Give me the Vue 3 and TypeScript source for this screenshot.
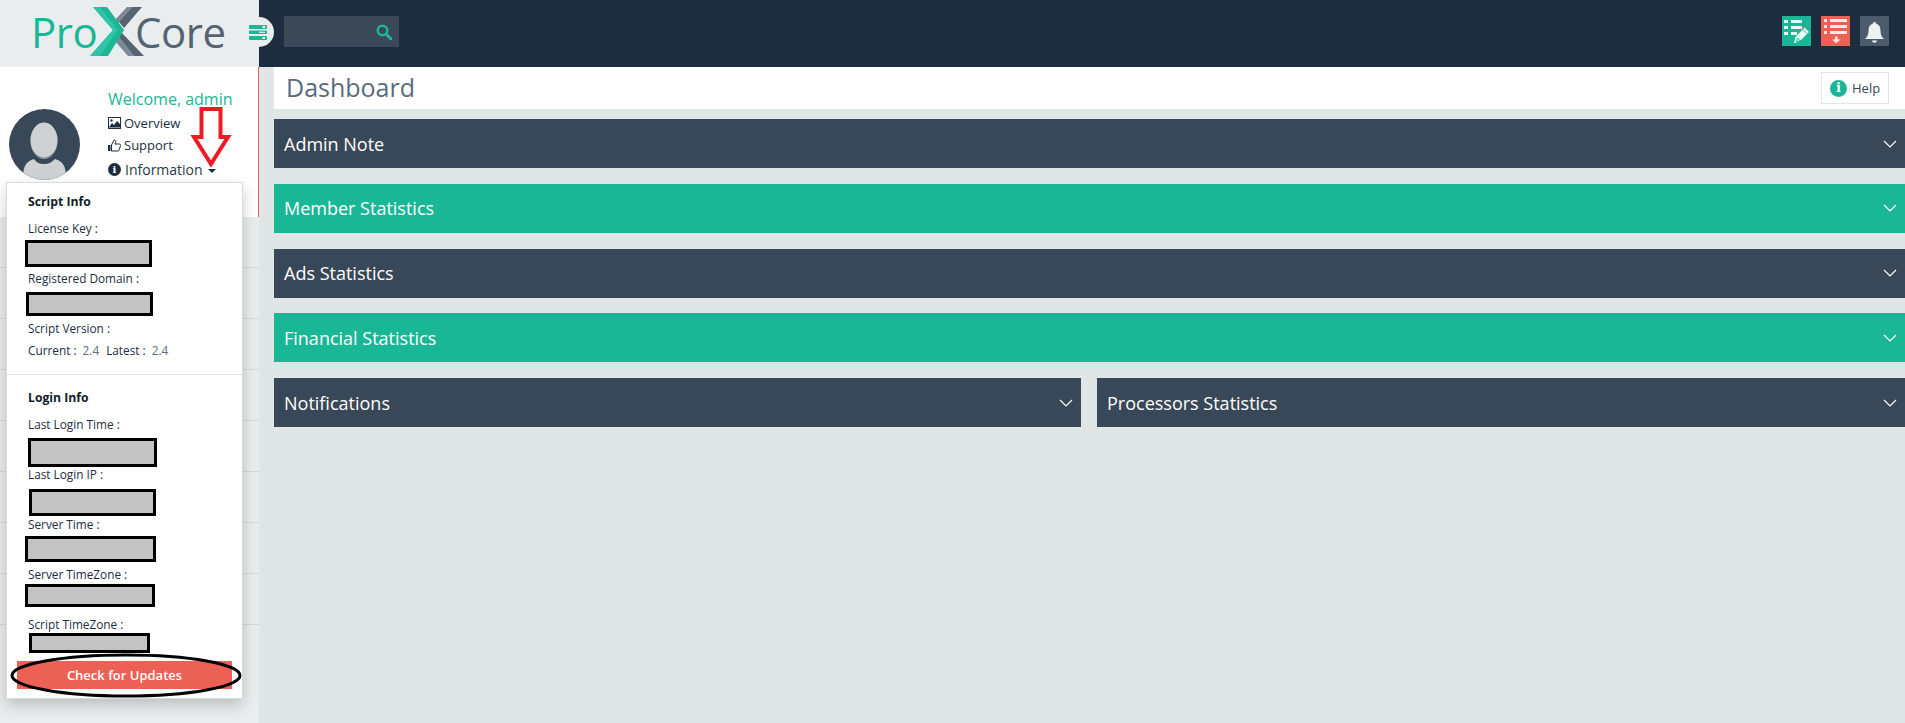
<script setup lang="ts">
interface Field {
  label: string
  left: number
  width: number
  height: number
  top: number
}

const panels = [
  { title: 'Admin Note', tone: 'dark' },
  { title: 'Member Statistics', tone: 'teal' },
  { title: 'Ads Statistics', tone: 'dark' },
  { title: 'Financial Statistics', tone: 'teal' },
]
const splitPanels = ['Notifications', 'Processors Statistics']
const navRows = [1, 2, 3, 4, 5, 6, 7, 8]

const scriptFields: Field[] = [
  { label: 'License Key :', left: -3, width: 127, height: 27, top: 2 },
  { label: 'Registered Domain :', left: -2, width: 127, height: 24, top: 4 },
]
const loginFields: Field[] = [
  { label: 'Last Login Time :', left: 0, width: 129, height: 29, top: 4 },
  { label: 'Last Login IP :', left: 1, width: 127, height: 27, top: 5 },
  { label: 'Server Time :', left: -3, width: 131, height: 26, top: 2 },
  { label: 'Server TimeZone :', left: -3, width: 130, height: 23, top: 0 },
  { label: 'Script TimeZone :', left: 1, width: 121, height: 20, top: -1 },
]
function boxStyle(f: Field) {
  return {
    marginLeft: f.left + 'px',
    marginTop: f.top + 'px',
    width: f.width + 'px',
    height: f.height + 'px',
  }
}
</script>

<template>
  <div class="page">
    <header class="topbar">
      <div class="brand">
        <span class="brand-pro">Pro</span>
        <svg class="brand-x" viewBox="0 0 56 50" width="56" height="50">
          <polygon points="37,0 42,0 26,19 23,15" fill="#7d8996" />
          <polygon points="42,0 52,0 34,21 29,15" fill="#566472" />
          <polygon points="24,33 28,29 44,49 38,49" fill="#7d8996" />
          <polygon points="28,29 32,26 54,49 44,49" fill="#566472" />
          <polygon points="3,0 17,0 34,23 18,49 0,49 23,23" fill="#1ab797" />
          <polygon points="3,0 10,0 28,23 10,49 0,49 23,23" fill="#2fc4a6" />
        </svg>
        <span class="brand-core">Core</span>
      </div>
      <div class="toggle">
        <svg viewBox="0 0 18 15" width="18" height="15">
          <path d="M1 0h16a1 1 0 0 1 1 1v2a1 1 0 0 1-1 1H1a1 1 0 0 1-1-1V1a1 1 0 0 1 1-1zM1 5.500h16a1 1 0 0 1 1 1v1.500a1 1 0 0 1-1 1H1a1 1 0 0 1-1-1v-1.500a1 1 0 0 1 1-1zM1 11h16a1 1 0 0 1 1 1v2a1 1 0 0 1-1 1H1a1 1 0 0 1-1-1v-2a1 1 0 0 1 1-1z" fill="#1ab797" />
          <path d="M13.500 1h2.500v2h-2.500zM10 6.800h6v1h-6zM13.500 12h2.500v2h-2.500z" fill="#fff" />
        </svg>
      </div>
      <div class="search">
        <svg viewBox="0 0 16 16" width="16" height="16">
          <circle cx="6.500" cy="6.500" r="4.800" fill="none" stroke="#1ab797" stroke-width="2.400" />
          <path d="M10 10l5 5" stroke="#1ab797" stroke-width="3" stroke-linecap="round" />
        </svg>
      </div>
      <div class="top-actions">
        <span class="tile tile-teal">
          <svg viewBox="0 0 29 30" width="29" height="30">
            <path d="M2 4h4v3H2zM9 4h11v3H9zM2 10h4v3H2zM9 10h11v3H9zM2 16h4v3H2zM9 16h6v3H9z" fill="#eafaf6" />
            <path d="M12 27l1.500-6 9-9.500 4.500 4.500-9.500 9.500z" fill="#eafaf6" />
            <path d="M14.500 25.500l1-3.500 3 3zM21 13.500l4 4" fill="none" stroke="#1ab797" stroke-width="1" />
          </svg>
        </span>
        <span class="tile tile-red">
          <svg viewBox="0 0 29 30" width="29" height="30">
            <path d="M3 3h3v3H3zM9 3h17v3H9zM3 9h3v3H3zM9 9h17v3H9zM3 15h3v3H3zM9 15h17v3H9z" fill="#fde8e6" />
            <path d="M14 20.500h2.500v3h3l-4.250 3.800-4.250-3.800h3z" fill="#fde8e6" />
          </svg>
        </span>
        <span class="tile tile-slate">
          <svg viewBox="0 0 29 30" width="29" height="30">
            <path d="M14.500 6a1.800 1.800 0 0 1 1.800 1.800c3 .9 4.200 3.600 4.200 7 0 4.200 1.300 6.400 3.500 8.200H5c2.200-1.800 3.500-4 3.500-8.200 0-3.400 1.200-6.100 4.200-7A1.800 1.800 0 0 1 14.500 6z" fill="#eef1f2" />
            <path d="M12 24.500h5c0 1.200-1.100 2.300-2.500 2.300s-2.500-1.100-2.500-2.300z" fill="#eef1f2" />
          </svg>
        </span>
      </div>
    </header>

    <div class="body">
      <aside class="sidebar">
        <section class="user">
          <svg class="avatar" viewBox="0 0 71 71" width="71" height="71">
            <defs>
              <clipPath id="avatar-clip"><circle cx="35.500" cy="35.500" r="35.500" /></clipPath>
            </defs>
            <circle cx="35.500" cy="35.500" r="35.500" fill="#394858" />
            <g clip-path="url(#avatar-clip)">
              <ellipse cx="35" cy="32" rx="13.500" ry="18" fill="#8d949b" />
              <ellipse cx="35" cy="31" rx="13.500" ry="17.500" fill="#cdd1d4" />
              <path d="M14 71c0-11 1-18 11-21 2 3 5 5 10 5s8-2 11-5c10 3 11 10 11 21z" fill="#cdd1d4" />
            </g>
          </svg>
          <div class="user-links">
            <div class="welcome">Welcome, admin</div>
            <div class="user-link">
              <svg viewBox="0 0 13 12" width="13" height="12">
                <rect width="13" height="12" fill="#1d2d3f" />
                <rect x="1" y="1" width="11" height="10" fill="#fff" />
                <path d="M1 10l3-4 2 2 3-4 3 3v3.500H1z" fill="#1d2d3f" />
                <circle cx="3.500" cy="3.500" r="1.200" fill="#1d2d3f" />
              </svg>
              <span>Overview</span>
            </div>
            <div class="user-link">
              <svg viewBox="0 0 13 13" width="13" height="13">
                <path d="M3.500 12V6l2.500-5c1.500 0 2 1 1.500 2.500L7 5h4.500c1 0 1.300 1 1 1.800l-1.500 4.400c-.2.500-.5.800-1 .8z" fill="none" stroke="#1d2d3f" stroke-width="1" />
                <rect x="0" y="6" width="2.500" height="6" fill="#1d2d3f" />
              </svg>
              <span>Support</span>
            </div>
            <div class="user-link user-link-info">
              <span class="info-dot info-dot-dark">i</span>
              <span>Information</span>
              <span class="caret"></span>
            </div>
          </div>
        </section>
        <div v-for="row in navRows" :key="row" class="nav-row"></div>

        <div class="info-menu">
          <h4 class="menu-title">Script Info</h4>
          <div v-for="f in scriptFields" :key="f.label" class="field">
            <div class="field-label">{{ f.label }}</div>
            <div class="redact" :style="boxStyle(f)"></div>
          </div>
          <div class="field-label">Script Version :</div>
          <div class="field-label version">
            <span>Current :</span><span class="num">2.4</span>
            <span class="latest">Latest :</span><span class="num">2.4</span>
          </div>
          <hr class="menu-rule" />
          <h4 class="menu-title">Login Info</h4>
          <div class="login-list">
            <div v-for="f in loginFields" :key="f.label" class="field">
              <div class="field-label">{{ f.label }}</div>
              <div class="redact" :style="boxStyle(f)"></div>
            </div>
          </div>
          <button class="update-btn" type="button">Check for Updates</button>
        </div>
      </aside>

      <main class="main">
        <div class="page-title">
          <h1>Dashboard</h1>
          <button class="help" type="button">
            <span class="info-dot info-dot-teal">i</span>
            Help
          </button>
        </div>
        <div class="panels">
          <div v-for="p in panels" :key="p.title" class="panel" :class="p.tone">
            <span>{{ p.title }}</span>
            <svg class="chev" viewBox="0 0 14 8" width="14" height="8"><path d="M1 1l6 6 6-6" fill="none" stroke="#fff" stroke-width="1.200" /></svg>
          </div>
          <div class="split">
            <div v-for="t in splitPanels" :key="t" class="panel dark">
              <span>{{ t }}</span>
              <svg class="chev" viewBox="0 0 14 8" width="14" height="8"><path d="M1 1l6 6 6-6" fill="none" stroke="#fff" stroke-width="1.200" /></svg>
            </div>
          </div>
        </div>
      </main>
    </div>

    <svg class="annotations" viewBox="0 0 1905 723" width="1905" height="723">
      <polygon points="201.500,109 220.500,109 220.500,137 228,137 211,164 194,137 201.500,137" fill="none" stroke="#ed1c24" stroke-width="4" />
      <ellipse cx="126" cy="675.500" rx="114" ry="20.500" fill="none" stroke="#000" stroke-width="3" />
    </svg>
  </div>
</template>

<style>
html, body { margin: 0; background: #e0e5e5; }
</style>

<style scoped>
* { box-sizing: border-box; }
.page {
  position: relative;
  width: 1905px;
  height: 723px;
  overflow: hidden;
  background: #e0e5e5;
  font-family: "Open Sans", "Liberation Sans", sans-serif;
  display: flex;
  flex-direction: column;
}
.topbar {
  position: relative;
  height: 67px;
  flex: none;
  background: #1d2d3f;
  display: flex;
  align-items: flex-start;
}
.brand {
  width: 259px;
  height: 67px;
  flex: none;
  background: #e9edee;
  display: flex;
  align-items: center;
  padding: 0 0 3px 31px;
  font-size: 42px;
  line-height: 1;
  letter-spacing: -0.5px;
}
.brand-pro { color: #1ab797; width: 59px; }
.brand-core { color: #566472; margin-left: -11px; }
.brand-x { flex: none; }
.toggle {
  position: absolute;
  left: 244px;
  top: 17px;
  width: 30px;
  height: 30px;
  border-radius: 50%;
  background: #e9edee;
  display: flex;
  align-items: center;
  padding-left: 5px;
}
.search {
  margin: 16px 0 0 25px;
  width: 115px;
  height: 31px;
  background: #3a4858;
  display: flex;
  align-items: center;
  justify-content: flex-end;
  padding-right: 7px;
}
.top-actions {
  margin: 16px 16px 0 auto;
  display: flex;
  gap: 10px;
}
.tile { width: 29px; height: 30px; display: block; }
.tile svg { display: block; }
.tile-teal { background: #1ab797; }
.tile-red { background: #ec6156; }
.tile-slate { background: #4c5c6c; }

.body { flex: 1; display: flex; min-height: 0; }
.sidebar {
  position: relative;
  width: 259px;
  flex: none;
  background: #e9edee;
}
.user {
  height: 150px;
  background: #fff;
  border-right: 1px solid #ec6156;
  position: relative;
  padding: 22px 0 0 108px;
}
.avatar { position: absolute; left: 9px; top: 42px; }
.welcome {
  color: #1ab797;
  font-size: 16px;
  line-height: 20px;
}
.user-link {
  display: flex;
  align-items: center;
  gap: 3px;
  height: 22px;
  font-size: 13px;
  color: #1d2d3f;
}
.user-links .welcome + .user-link { margin-top: 3px; }
.user-link-info {
  font-size: 14px;
  gap: 4px;
  margin-top: 1px;
  height: 25px;
  color: #2a3847;
}
.caret {
  margin-left: 1px;
  width: 0;
  height: 0;
  border-left: 4px solid transparent;
  border-right: 4px solid transparent;
  border-top: 4px solid #1d2d3f;
  margin-top: 3px;
}
.info-dot {
  flex: none;
  display: inline-flex;
  align-items: center;
  justify-content: center;
  border-radius: 50%;
  color: #fff;
  font-family: "DejaVu Serif", serif;
  font-weight: 700;
}
.info-dot-dark { width: 13px; height: 13px; font-size: 10px; background: #1d2d3f; }
.info-dot-teal { width: 17px; height: 17px; font-size: 12px; background: #1ab797; }
.nav-row { height: 51px; border-bottom: 1px solid #d5dada; }

.info-menu {
  position: absolute;
  left: 6px;
  top: 115px;
  width: 237px;
  height: 517px;
  background: #fff;
  border: 1px solid #d9dddd;
  box-shadow: 0 6px 14px rgba(0, 0, 0, 0.2);
  padding: 9px 0 0 21px;
  color: #1d2d3f;
}
.menu-title {
  margin: 0;
  font-size: 12.200px;
  line-height: 20px;
  font-weight: 700;
  color: #111c28;
}
.info-menu > .menu-title:first-child { margin-bottom: 6px; }
.field { height: 50px; }
.field-label {
  font-size: 11.800px;
  line-height: 20px;
  color: #1d2d3f;
  white-space: nowrap;
}
.version { margin-top: 2px; display: flex; }
.num { color: #5f6f80; margin-left: 6px; }
.latest { margin-left: 7px; }
.redact {
  position: relative;
  background: #c3c3c3;
  border: 3px solid #000;
}
.menu-rule {
  margin: 14px 0 13px -21px;
  border: 0;
  border-top: 1px solid #e3e6e6;
  width: 235px;
}
.login-list { margin-top: 6px; }
.update-btn {
  position: absolute;
  left: 10px;
  top: 478px;
  width: 215px;
  height: 28px;
  border: 0;
  padding: 0;
  background: #ec6156;
  color: #fff;
  font-family: inherit;
  font-size: 13px;
  font-weight: 600;
}

.main { flex: 1; min-width: 0; padding-left: 15px; }
.page-title {
  height: 42px;
  background: #fff;
  display: flex;
  align-items: center;
  justify-content: space-between;
  padding: 0 16px 0 12px;
}
.page-title h1 {
  margin: 0 0 2px;
  font-size: 25px;
  font-weight: 400;
  color: #5a6b7d;
}
.help {
  width: 68px;
  height: 32px;
  background: #fff;
  border: 1px solid #e0e5e5;
  display: flex;
  align-items: center;
  gap: 5px;
  padding: 0 0 0 8px;
  font-family: inherit;
  font-size: 13px;
  color: #394858;
}
.panels {
  margin-top: 10px;
  display: flex;
  flex-direction: column;
  gap: 15.750px;
}
.panel {
  height: 49px;
  display: flex;
  align-items: center;
  justify-content: space-between;
  padding: 0 8px 0 10px;
  color: #fff;
  font-size: 18px;
}
.panel.dark { background: #394858; }
.panel.teal { background: #1ab797; }
.split { display: grid; grid-template-columns: 807px 1fr; gap: 16px; }
.annotations {
  position: absolute;
  left: 0;
  top: 0;
  pointer-events: none;
}
</style>
